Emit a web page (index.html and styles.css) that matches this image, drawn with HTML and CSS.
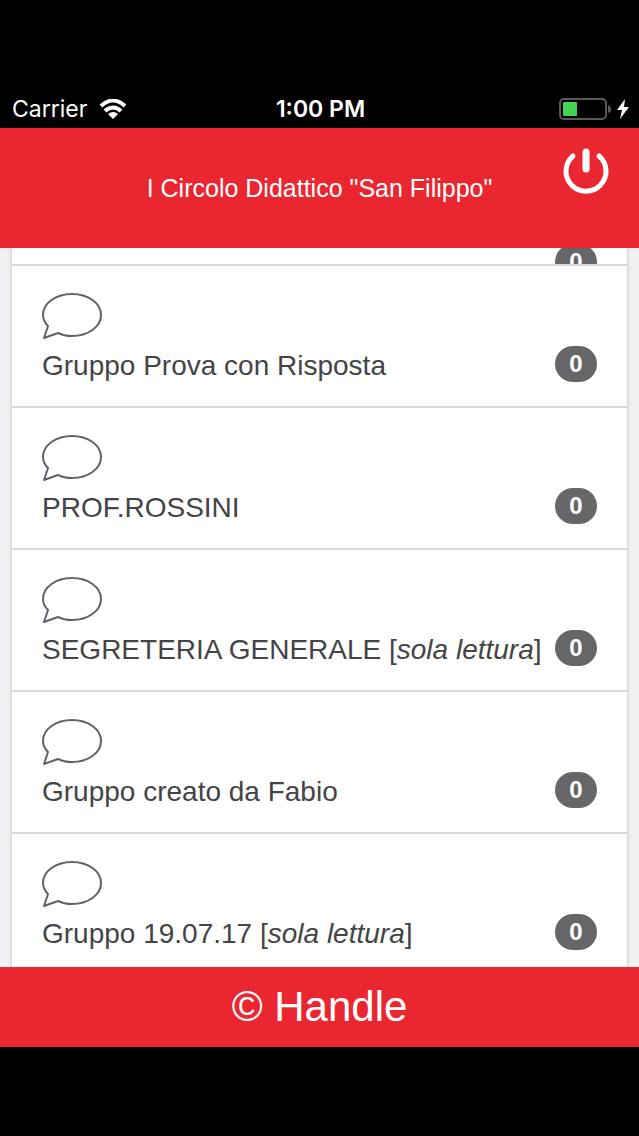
FILE: index.html
```html
<!DOCTYPE html>
<html lang="it">

<head>
    <meta charset="utf-8">
    <meta name="viewport" content="width=device-width, initial-scale=1.0">
    <title>Handle</title>
    <link rel="stylesheet" href="styles.css">
</head>

<body>
    <svg class="defs" aria-hidden="true">
        <symbol id="bubble" viewBox="0 0 60 48">
            <path d="M6 34C3 31 1 27 1 23C1 11 14 2 30 2S59 11 59 23S46 44 30 44C25 44 20 43 16 41L2 46Z" />
        </symbol>
    </svg>

    <div class="status-bar">
        <div class="carrier">
            <span>Carrier</span>
            <svg class="wifi" viewBox="0 0 28 20" aria-hidden="true">
                <path class="wave" d="M2 7Q14 -4 26 7" />
                <path class="wave" d="M6 12Q14 5 22 12" />
                <path class="dot" d="M9 15Q14 11 19 15L14 20Z" />
            </svg>
        </div>
        <div class="clock">1:00 PM</div>
        <div class="power">
            <svg class="battery" viewBox="0 0 52 24" aria-hidden="true">
                <rect class="shell" x="1" y="2" width="46" height="20" rx="4" />
                <rect class="charge" x="4" y="5" width="14" height="14" rx="1" />
                <path class="cap" d="M49 8Q52 9 52 12T49 16Z" />
            </svg>
            <svg class="bolt" viewBox="0 0 12 20" aria-hidden="true">
                <path d="M8 0L0 11H5L3 20L12 8H7Z" />
            </svg>
        </div>
    </div>

    <header class="header">
        <h1>I Circolo Didattico "San Filippo"</h1>
        <button class="logout" type="button" aria-label="Esci">
            <svg viewBox="0 0 46 46" aria-hidden="true">
                <path d="M10 8A20 20 0 1 0 36 8" />
                <path class="stem" d="M23 4V21" />
            </svg>
        </button>
    </header>

    <main class="content">
        <ul class="groups">
            <li class="cut">
                <span class="badge">0</span>
            </li>
            <li>
                <a class="group" href="#">
                    <span class="name">
                        <svg class="bubble" aria-hidden="true"><use href="#bubble" /></svg>
                        <span>Gruppo Prova con Risposta</span>
                    </span>
                    <span class="badge">0</span>
                </a>
            </li>
            <li>
                <a class="group" href="#">
                    <span class="name">
                        <svg class="bubble" aria-hidden="true"><use href="#bubble" /></svg>
                        <span>PROF.ROSSINI</span>
                    </span>
                    <span class="badge">0</span>
                </a>
            </li>
            <li>
                <a class="group" href="#">
                    <span class="name">
                        <svg class="bubble" aria-hidden="true"><use href="#bubble" /></svg>
                        <span>SEGRETERIA GENERALE [<em>sola lettura</em>]</span>
                    </span>
                    <span class="badge">0</span>
                </a>
            </li>
            <li>
                <a class="group" href="#">
                    <span class="name">
                        <svg class="bubble" aria-hidden="true"><use href="#bubble" /></svg>
                        <span>Gruppo creato da Fabio</span>
                    </span>
                    <span class="badge">0</span>
                </a>
            </li>
            <li>
                <a class="group" href="#">
                    <span class="name">
                        <svg class="bubble" aria-hidden="true"><use href="#bubble" /></svg>
                        <span>Gruppo 19.07.17 [<em>sola lettura</em>]</span>
                    </span>
                    <span class="badge">0</span>
                </a>
            </li>
        </ul>
    </main>

    <footer class="footer">© Handle</footer>
</body>

</html>
```

FILE: styles.css
```css
* {
    box-sizing: border-box;
}

body {
    margin: 0;
    height: 100vh;
    padding: 90px 0 89px;
    display: flex;
    flex-direction: column;
    background-color: #000;
    color: #444447;
    font-family: "Liberation Sans", Arial, sans-serif;
}

.defs {
    display: none;
}

/* Status bar */
.status-bar {
    display: grid;
    grid-template-columns: 1fr auto 1fr;
    align-items: center;
    height: 38px;
    flex-shrink: 0;
    padding: 0 10px 0 12px;
    color: #fff;
    font-family: Inter, sans-serif;
    font-size: 23px;
}

.carrier,
.power {
    display: flex;
    align-items: center;
    gap: 12px;
}

.power {
    justify-content: flex-end;
    gap: 6px;
}

.clock {
    font-weight: 600;
}

.wifi {
    width: 28px;
    height: 20px;
}

.wave {
    fill: none;
    stroke: #fff;
    stroke-width: 4;
}

.dot,
.bolt {
    fill: #fff;
}

.battery {
    width: 52px;
    height: 24px;
}

.shell {
    fill: none;
    stroke: #59595b;
    stroke-width: 2;
}

.charge {
    fill: #43d551;
}

.cap {
    fill: #59595b;
}

.bolt {
    width: 12px;
    height: 20px;
}

/* Header */
.header {
    display: grid;
    grid-template-columns: 1fr auto 1fr;
    flex-shrink: 0;
    height: 120px;
    padding: 20px 30px;
    background-color: #ea2731;
    color: #fff;
}

.header h1 {
    grid-column: 2;
    align-self: center;
    margin: 0;
    font-size: 25px;
    font-weight: normal;
}

.logout {
    justify-self: end;
    align-self: start;
    padding: 0;
    border: none;
    background: none;
    cursor: pointer;
}

.logout svg {
    display: block;
    width: 46px;
    height: 46px;
    fill: none;
    stroke: #fff;
    stroke-width: 5;
    stroke-linecap: round;
}

.logout .stem {
    stroke-width: 7;
}

/* Group list */
.content {
    flex: 1;
    min-height: 0;
    overflow: hidden;
    padding: 0 11px;
    background-color: #f0f1f4;
}

.groups {
    margin: 0;
    padding: 0;
    list-style: none;
    background-color: #fff;
    border: solid #d8d9dc;
    border-width: 0 1px;
    box-shadow: 0 0 3px #d0d1d4;
}

.groups li {
    border-bottom: 2px solid #d8d9dc;
}

/* Row scrolled almost entirely under the header */
.groups .cut {
    display: flex;
    justify-content: flex-end;
    align-items: flex-end;
    height: 18px;
    padding-right: 30px;
    overflow: hidden;
}

.cut .badge {
    margin-bottom: -16px;
}

.group {
    display: flex;
    justify-content: space-between;
    align-items: flex-end;
    height: 140px;
    padding: 24px 30px;
    color: inherit;
    text-decoration: none;
}

.name {
    display: flex;
    flex-direction: column;
    gap: 10px;
    font-size: 28px;
    line-height: 32px;
    white-space: nowrap;
}

.bubble {
    width: 60px;
    height: 48px;
    fill: none;
    stroke: #626069;
    stroke-width: 2;
    stroke-linejoin: round;
}

.badge {
    flex-shrink: 0;
    width: 42px;
    border-radius: 18px;
    background-color: #666668;
    color: #fff;
    font-size: 24px;
    font-weight: bold;
    line-height: 36px;
    text-align: center;
}

/* Footer */
.footer {
    flex-shrink: 0;
    background-color: #ea2731;
    color: #fff;
    font-size: 42px;
    line-height: 80px;
    text-align: center;
}
```
